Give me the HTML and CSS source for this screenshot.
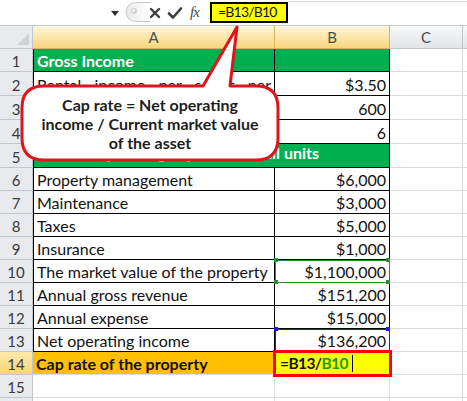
FILE: index.html
```html
<!DOCTYPE html>
<html>
<head>
<meta charset="utf-8">
<link rel="stylesheet" href="styles.css">
</head>
<body>
<div class="fbar">
  <div class="namebox">
    <svg class="dd" width="8" height="5" viewBox="0 0 8 5"><path d="M0 0H8L4 5Z" fill="#333"/></svg>
  </div>
  <div class="tools">
    <svg class="pill" width="26" height="20" viewBox="0 0 26 20">
      <defs><linearGradient id="pg" x1="0" y1="0" x2="1" y2="0"><stop offset="0" stop-color="#e9e9e9"/><stop offset="0.6" stop-color="#f7f7f7"/><stop offset="1" stop-color="#ffffff"/></linearGradient></defs>
      <path d="M26 0.5H10.5A9.5 9.5 0 0 0 10.5 19.5H26" fill="url(#pg)" stroke="#c9c9c9"/>
      <circle cx="9" cy="9" r="3" fill="#d4d4d4"/>
      <circle cx="8.5" cy="8.5" r="1.4" fill="#f5f5f5"/>
    </svg>
    <svg class="ic ix" width="14" height="14" viewBox="0 0 14 14"><path d="M3 3L11 11M11 3L3 11" stroke="#3d3d3d" stroke-width="2.4" stroke-linecap="round"/></svg>
    <svg class="ic ick" width="16" height="14" viewBox="0 0 16 14"><path d="M2 7.5L6 11.5L14 2.5" stroke="#3d3d3d" stroke-width="2.6" fill="none" stroke-linecap="round" stroke-linejoin="round"/></svg>
    <span class="fx">fx</span>
  </div>
  <div class="fbox">=B13/B10</div>
  <div class="frest"></div>
</div>

<div class="sheet">
  <div class="corner"><svg width="33" height="22" viewBox="0 0 33 22"><path d="M29 7V19H17Z" fill="#cfd1d4"/></svg></div>
  <div class="hd sel">A</div>
  <div class="hd sel">B</div>
  <div class="hd">C</div>
  <div class="hd"></div>

  <div class="rh">1</div>
  <div class="c t a g">Gross Income</div>
  <div class="c t g"></div>
  <div class="c"></div><div class="c"></div>

  <div class="rh">2</div>
  <div class="c t a"><span class="just">Rental income per sq ft per</span></div>
  <div class="c t num">$3.50</div>
  <div class="c"></div><div class="c"></div>

  <div class="rh">3</div>
  <div class="c t a"></div>
  <div class="c t num">600</div>
  <div class="c"></div><div class="c"></div>

  <div class="rh">4</div>
  <div class="c t a"></div>
  <div class="c t num">6</div>
  <div class="c"></div><div class="c"></div>

  <div class="rh">5</div>
  <div class="c t a g span2 r5">Operating expenses for all units</div>
  <div class="c"></div><div class="c"></div>

  <div class="rh">6</div>
  <div class="c t a">Property management</div>
  <div class="c t num">$6,000</div>
  <div class="c"></div><div class="c"></div>

  <div class="rh">7</div>
  <div class="c t a">Maintenance</div>
  <div class="c t num">$3,000</div>
  <div class="c"></div><div class="c"></div>

  <div class="rh">8</div>
  <div class="c t a">Taxes</div>
  <div class="c t num">$5,000</div>
  <div class="c"></div><div class="c"></div>

  <div class="rh">9</div>
  <div class="c t a">Insurance</div>
  <div class="c t num">$1,000</div>
  <div class="c"></div><div class="c"></div>

  <div class="rh">10</div>
  <div class="c t a">The market value of the property</div>
  <div class="c t num mq mg">$1,100,000</div>
  <div class="c"></div><div class="c"></div>

  <div class="rh">11</div>
  <div class="c t a">Annual gross revenue</div>
  <div class="c t num">$151,200</div>
  <div class="c"></div><div class="c"></div>

  <div class="rh">12</div>
  <div class="c t a">Annual expense</div>
  <div class="c t num">$15,000</div>
  <div class="c"></div><div class="c"></div>

  <div class="rh">13</div>
  <div class="c t a">Net operating income</div>
  <div class="c t num mq mb">$136,200</div>
  <div class="c"></div><div class="c"></div>

  <div class="rh rsel">14</div>
  <div class="c a orange">Cap rate of the property</div>
  <div class="c active">=B13/<span class="ref">B10</span><span class="caret"></span></div>
  <div class="c"></div><div class="c"></div>

  <div class="rh">15</div>
  <div class="c"></div><div class="c"></div><div class="c"></div><div class="c"></div>

  <div class="rh"></div>
  <div class="c"></div><div class="c"></div><div class="c"></div><div class="c"></div>
</div>

<svg class="callout" width="467" height="401" viewBox="0 0 467 401">
  <path d="M44 86 L203 86 L237 27 L230 86 L256 86 Q278 86 278 108 L278 138 Q278 160 256 160 L44 160 Q22 160 22 138 L22 108 Q22 86 44 86 Z" fill="#fff" stroke="#e0141c" stroke-width="3" stroke-linejoin="round"/>
</svg>
<div class="ctext">Cap rate = Net operating<br>income / Current market value<br>of the asset</div>
</body>
</html>
```

FILE: styles.css
```css
html, body {
  margin: 0;
  padding: 0;
  background: #fff;
}
body {
  width: 467px;
  height: 401px;
  overflow: hidden;
  position: relative;
  font-family: Lato, "Liberation Sans", sans-serif;
}

/* formula bar */
.fbar {
  display: grid;
  grid-template-columns: 120px 90px 78px 1fr;
  height: 26px;
  border-bottom: 1px solid #c6cad0;
  box-sizing: border-box;
  background: #fff;
}
.namebox {
  display: flex;
  align-items: center;
}
.dd { margin-left: 111px; margin-top: 1px; }
.tools {
  display: flex;
  align-items: center;
}
.tools > * { flex: none; }
.pill { margin-left: 5px; margin-top: -1px; }
.ix { margin-left: -3px; }
.ick { margin-left: 5px; }
.fx {
  font-family: "Liberation Serif", serif;
  font-style: italic;
  font-size: 15px;
  color: #4a4a4a;
  margin-left: 7px;
  letter-spacing: -1px;
  line-height: 15px;
}
.fbox {
  margin-top: 2px;
  height: 21px;
  box-sizing: border-box;
  border: 2.5px solid #000;
  background: #ffff00;
  font-size: 14px;
  letter-spacing: -0.8px;
  line-height: 16px;
  padding-left: 6px;
  color: #111;
  white-space: nowrap;
}
.frest {
  border-top: 1px solid #d4d7db;
  margin-top: 1px;
  height: 21px;
}

/* sheet grid */
.sheet {
  display: grid;
  grid-template-columns: 33px 242px 115px 73px 1fr;
  grid-template-rows: 23px 23px repeat(4, 24px) repeat(9, 23px) 23px 23px;
}
.corner {
  background: #e8eaed;
  border-right: 1px solid #c3c7cc;
  border-bottom: 1px solid #c3c7cc;
  box-sizing: border-box;
}
.corner svg { display: block; }
.hd {
  box-sizing: border-box;
  border-right: 1px solid #c3c7cc;
  border-bottom: 1px solid #c3c7cc;
  background: linear-gradient(#f6f7f8, #e2e4e7);
  display: flex;
  align-items: center;
  justify-content: center;
  font-size: 15px;
  color: #4d4d4d;
}
.hd.sel {
  background: linear-gradient(#fef6dc, #f9d57c);
  border-right-color: #d9b45a;
  border-bottom-color: #d9b45a;
}
.rh {
  box-sizing: border-box;
  background: #e8eaed;
  border-right: 1px solid #c3c7cc;
  border-bottom: 1px solid #c3c7cc;
  display: flex;
  align-items: flex-end;
  justify-content: center;
  font-size: 15px;
  line-height: 20px;
  color: #3a3a3a;
}
.rh.rsel {
  background: linear-gradient(#fde9a8, #f9d57c);
}
.c {
  box-sizing: border-box;
  border-right: 1px solid #dadcdd;
  border-bottom: 1px solid #dadcdd;
  display: flex;
  align-items: flex-end;
  padding: 0 3px 0 4px;
  font-size: 16px;
  line-height: 21px;
  color: #111;
  white-space: nowrap;
  overflow: hidden;
  position: relative;
}
.t {
  border-right-color: #000;
  border-bottom-color: #000;
}
.a { border-left: 1px solid #000; padding-left: 3px; }
.num { justify-content: flex-end; }
.g {
  background: #00b050;
  color: #fff;
  font-weight: bold;
}
.span2 { grid-column: span 2; }
.r5 { justify-content: flex-end; padding-right: 70px; padding-bottom: 4px; }
.just {
  display: block;
  width: 100%;
  text-align: justify;
  text-align-last: justify;
}
.orange {
  background: #ffc000;
  font-weight: bold;
  border-left: none;
  border-bottom-color: #dadcdd;
}
.active {
  background: #ffff00;
  font-weight: bold;
  font-size: 15.5px;
  letter-spacing: -0.6px;
  outline: 3px solid #ff0000;
  outline-offset: -1px;
  z-index: 2;
  overflow: visible;
  padding-left: 5px;
}
.ref { color: #1c9a1c; }
.caret {
  display: inline-block;
  width: 1px;
  height: 17px;
  background: #000;
  margin-left: 4px;
  margin-bottom: 2px;
}
.mq { overflow: visible; z-index: 1; }
.mg { outline: 1px solid #2e8b2e; outline-offset: -1px; }
.mb { outline: 1px solid #1a1aff; outline-offset: -1px; }
.mq::before {
  content: "";
  position: absolute;
  left: -1px;
  top: -2px;
  width: 4px;
  height: 4px;
  z-index: 3;
}
.mg::before {
  background: #2e8b2e;
  box-shadow: 112px 0 0 #2e8b2e, 0 22px 0 #2e8b2e, 112px 22px 0 #2e8b2e;
}
.mb::before {
  background: #1a1aff;
  box-shadow: 112px 0 0 #1a1aff;
}

/* callout */
.callout {
  position: absolute;
  left: 0;
  top: 0;
  pointer-events: none;
}
.ctext {
  position: absolute;
  left: 22px;
  top: 86px;
  width: 256px;
  height: 74px;
  display: flex;
  align-items: center;
  justify-content: center;
  text-align: center;
  font-weight: bold;
  font-size: 16px;
  line-height: 19px;
  color: #1e1e1e;
}
```
